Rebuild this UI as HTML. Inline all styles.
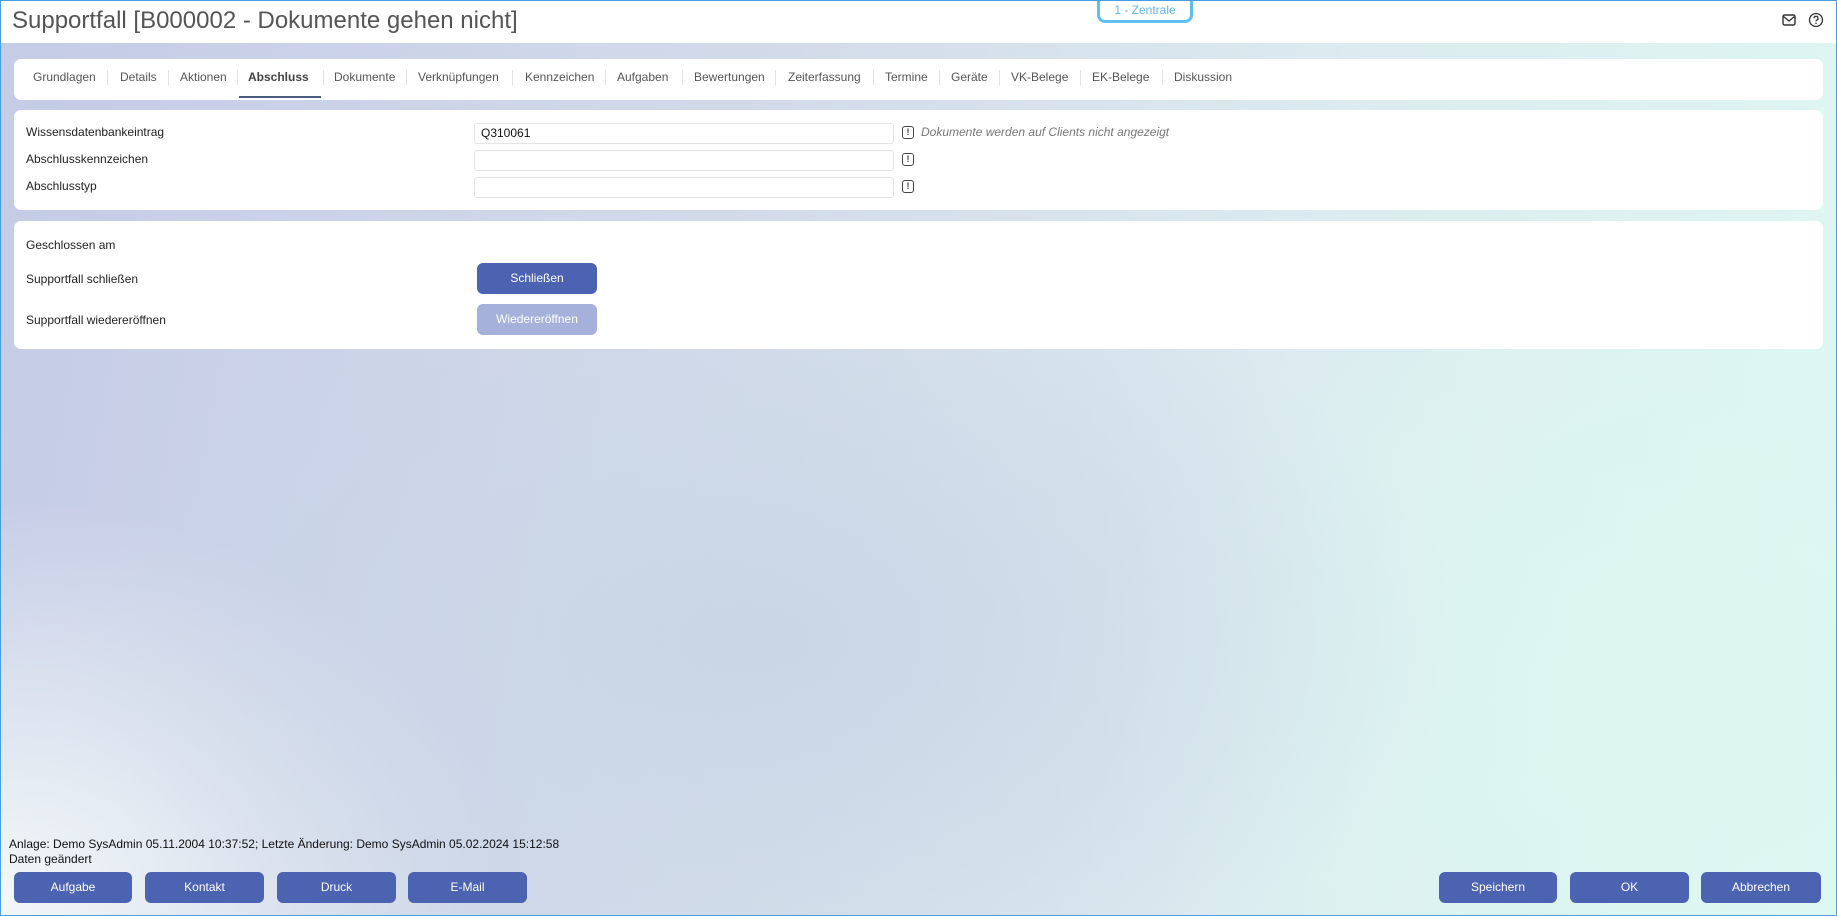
<!DOCTYPE html>
<html><head><meta charset="utf-8"><style>
*{box-sizing:border-box;margin:0;padding:0}
body{width:1837px;height:916px;overflow:hidden;font-family:"Liberation Sans",Arial,sans-serif;font-size:12px;color:#222;position:relative;
background:
radial-gradient(ellipse 700px 400px at 760px 640px,#c9d6e6 0%,rgba(201,214,230,0) 100%),
radial-gradient(ellipse 600px 500px at 1700px 700px,#dcf7f0 0%,rgba(220,247,240,0) 100%),
radial-gradient(ellipse 500px 400px at 0px 900px,#f2f8f8 0%,rgba(242,248,248,0) 100%),
linear-gradient(100deg,#c4cbe6 0%,#d3dbea 40%,#dcecf0 70%,#def8f2 100%);}
.frame{position:absolute;inset:0;border:1px solid #4a9de0;pointer-events:none}
.hdr{position:absolute;left:0;top:0;width:1837px;height:43px;background:#fff}
.title{position:absolute;left:12px;top:7px;font-size:24px;color:#555}
.pill{position:absolute;left:1097px;top:-3px;width:96px;height:26px;border:3px solid #5cc0f0;border-radius:0 0 8px 8px;background:#fff;color:#5cb8ee;font-size:12px;text-align:center;line-height:20px}
.card{position:absolute;left:14px;width:1809px;background:#fff;border-radius:7px}
.tab{position:absolute;top:70px;color:#555;font-size:12px}
.sep{position:absolute;top:70px;width:1px;height:15px;background:#e3e3e3}
.lbl{position:absolute;left:26px;font-size:12px;color:#222}
.inp{position:absolute;left:474px;width:420px;height:21px;border:1px solid #e4e4e4;border-radius:3px;background:#fff;padding-left:6px;line-height:19px;font-size:12px;color:#111}
.ic{position:absolute;left:902px;width:12px;height:13px;border:1.5px solid #444;border-radius:3px;font-size:9px;font-weight:bold;text-align:center;line-height:10px;color:#444}
.btn{position:absolute;height:31px;background:#4b63b0;color:#fff;border-radius:6px;text-align:center;line-height:31px;font-size:12px}
</style></head><body>
<div class="hdr"></div>
<div class="title">Supportfall [B000002 - Dokumente gehen nicht]</div>
<div class="pill">1 - Zentrale</div>
<svg style="position:absolute;left:1782px;top:14px" width="14" height="12" viewBox="0 0 14 12"><rect x="1" y="1" width="12" height="10" rx="1.5" fill="none" stroke="#333" stroke-width="1.4"/><path d="M1.5 2.5 L7 7 L12.5 2.5" fill="none" stroke="#333" stroke-width="1.4"/></svg>
<svg style="position:absolute;left:1808px;top:12px" width="16" height="16" viewBox="0 0 16 16"><circle cx="8" cy="8" r="6.5" fill="none" stroke="#333" stroke-width="1.3"/><path d="M6 6.3a2 2 0 1 1 2.6 1.9c-.5.2-.6.6-.6 1.2" fill="none" stroke="#333" stroke-width="1.3"/><circle cx="8" cy="11.4" r=".8" fill="#333"/></svg>

<div class="card" style="top:59px;height:41px"></div>
<span class="tab" style="left:33px">Grundlagen</span><span class="sep" style="left:107px"></span>
<span class="tab" style="left:120px">Details</span><span class="sep" style="left:168px"></span>
<span class="tab" style="left:180px">Aktionen</span><span class="sep" style="left:237px"></span>
<span class="tab" style="left:248px;font-weight:bold;color:#444">Abschluss</span><span class="sep" style="left:323px"></span>
<span style="position:absolute;left:239px;top:96px;width:82px;height:2px;background:#4a5d80"></span>
<span class="tab" style="left:334px">Dokumente</span><span class="sep" style="left:406px"></span>
<span class="tab" style="left:418px">Verknüpfungen</span><span class="sep" style="left:512px"></span>
<span class="tab" style="left:525px">Kennzeichen</span><span class="sep" style="left:605px"></span>
<span class="tab" style="left:617px">Aufgaben</span><span class="sep" style="left:682px"></span>
<span class="tab" style="left:694px">Bewertungen</span><span class="sep" style="left:775px"></span>
<span class="tab" style="left:788px">Zeiterfassung</span><span class="sep" style="left:873px"></span>
<span class="tab" style="left:885px">Termine</span><span class="sep" style="left:939px"></span>
<span class="tab" style="left:951px">Geräte</span><span class="sep" style="left:999px"></span>
<span class="tab" style="left:1011px">VK-Belege</span><span class="sep" style="left:1080px"></span>
<span class="tab" style="left:1092px">EK-Belege</span><span class="sep" style="left:1162px"></span>
<span class="tab" style="left:1174px">Diskussion</span>

<div class="card" style="top:110px;height:100px"></div>
<span class="lbl" style="top:125px">Wissensdatenbankeintrag</span>
<div class="inp" style="top:123px">Q310061</div>
<div class="ic" style="top:126px">!</div>
<span style="position:absolute;left:921px;top:125px;font-style:italic;color:#777">Dokumente werden auf Clients nicht angezeigt</span>
<span class="lbl" style="top:152px">Abschlusskennzeichen</span>
<div class="inp" style="top:150px"></div>
<div class="ic" style="top:153px">!</div>
<span class="lbl" style="top:179px">Abschlusstyp</span>
<div class="inp" style="top:177px"></div>
<div class="ic" style="top:180px">!</div>

<div class="card" style="top:221px;height:128px"></div>
<span class="lbl" style="top:238px">Geschlossen am</span>
<span class="lbl" style="top:272px">Supportfall schließen</span>
<div class="btn" style="left:477px;top:263px;width:120px">Schließen</div>
<span class="lbl" style="top:313px">Supportfall wiedereröffnen</span>
<div class="btn" style="left:477px;top:304px;width:120px;background:#a5b1da">Wiedereröffnen</div>

<span style="position:absolute;left:9px;top:837px;font-size:12px;color:#111">Anlage: Demo SysAdmin 05.11.2004 10:37:52; Letzte Änderung: Demo SysAdmin 05.02.2024 15:12:58</span>
<span style="position:absolute;left:9px;top:852px;font-size:12px;color:#111">Daten geändert</span>
<div class="btn" style="left:14px;top:872px;width:118px">Aufgabe</div>
<div class="btn" style="left:145px;top:872px;width:119px">Kontakt</div>
<div class="btn" style="left:277px;top:872px;width:119px">Druck</div>
<div class="btn" style="left:408px;top:872px;width:119px">E-Mail</div>
<div class="btn" style="left:1439px;top:872px;width:118px">Speichern</div>
<div class="btn" style="left:1570px;top:872px;width:119px">OK</div>
<div class="btn" style="left:1701px;top:872px;width:120px">Abbrechen</div>
<div class="frame"></div>
</body></html>
